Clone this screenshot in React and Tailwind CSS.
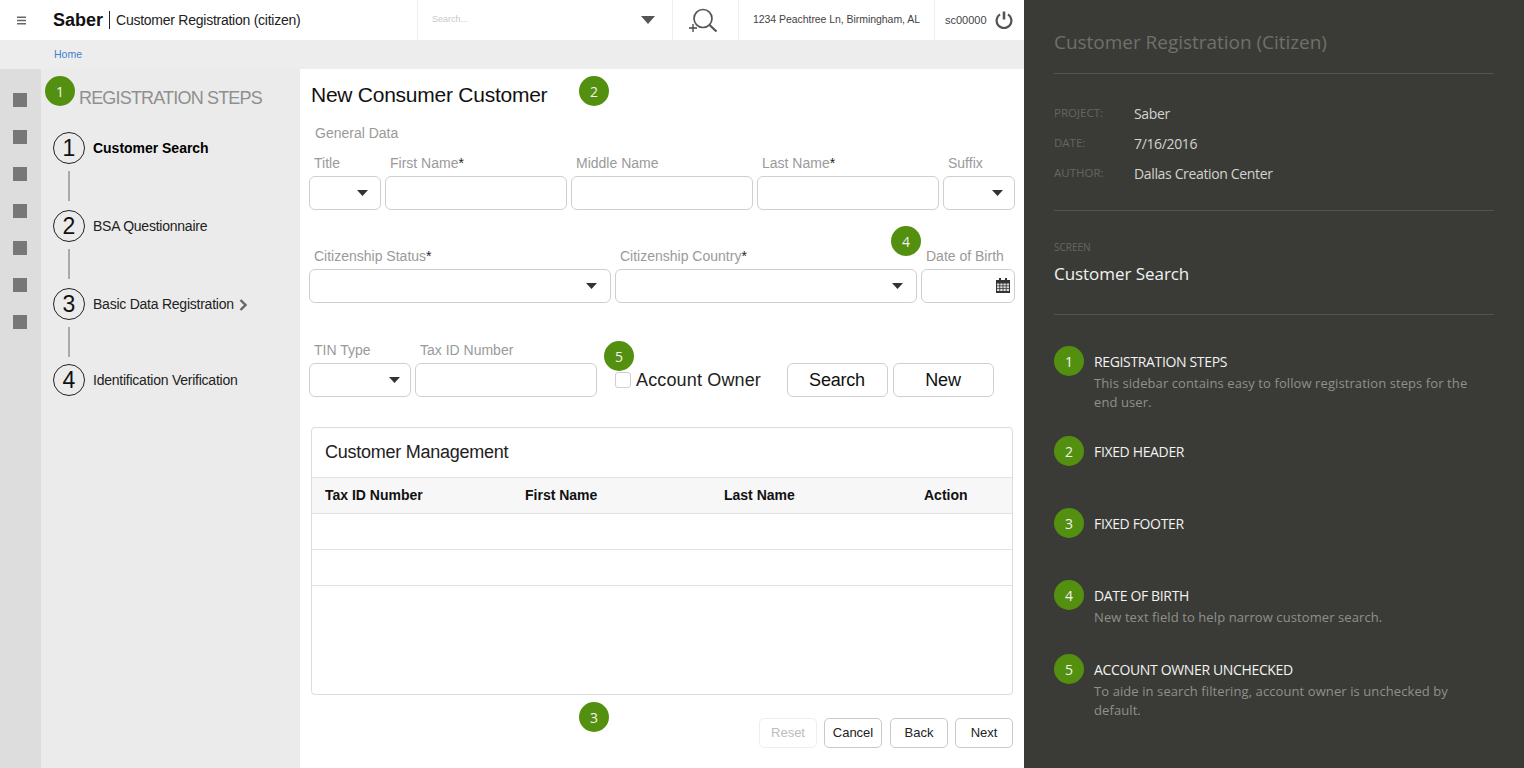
import React from "react";

const helv = "font-['Liberation_Sans','Inter',sans-serif]";
const seg = "font-['Open_Sans','Noto_Sans',sans-serif]";

function Badge({ n, className = "" }) {
  return (
    <div className={`absolute w-[30px] h-[30px] rounded-full bg-[#53900f] text-[#f2f2f2] flex items-center justify-center text-[14px] ${seg} ${className}`}>
      {n}
    </div>
  );
}

function Caret({ className = "" }) {
  return (
    <svg className={className} width="11" height="6" viewBox="0 0 11 6">
      <path d="M0 0h11L5.5 6z" fill="#333" />
    </svg>
  );
}

function Label({ children, star }) {
  return (
    <div className="h-[14px] leading-[14px] text-[14px] text-[#9a9a9a] pl-[5px] whitespace-nowrap">
      {children}
      {star && <span className="text-[#222]">*</span>}
    </div>
  );
}

function Field({ label, star, w, select, cal, pr = "pr-[13px]" }) {
  return (
    <div className={`flex flex-col gap-[6px] ${w}`}>
      <Label star={star}>{label}</Label>
      <div className={`h-[34px] border border-[#cfcfcf] rounded-[6px] bg-white flex items-center justify-end ${pr}`}>
        {select && <Caret />}
        {cal && (
          <svg className="mr-[-9px] mt-[-2px]" width="14" height="15" viewBox="0 0 14 15">
            <path d="M3 0h2v2H3zM9 0h2v2H9z" fill="#333" />
            <path d="M0 2h14v13H0z" fill="#333" />
            <path d="M1 5.5h2.4v2H1zM4.2 5.5h2.4v2H4.2zM7.4 5.5h2.4v2H7.4zM10.6 5.5H13v2h-2.4zM1 8.3h2.4v2H1zM4.2 8.3h2.4v2H4.2zM7.4 8.3h2.4v2H7.4zM10.6 8.3H13v2h-2.4zM1 11.1h2.4v2H1zM4.2 11.1h2.4v2H4.2zM7.4 11.1h2.4v2H7.4zM10.6 11.1H13v2h-2.4z" fill="#ddd" />
          </svg>
        )}
      </div>
    </div>
  );
}

function Step({ n, label, bold, arrow, line, lineBox = "h-[46px]" }) {
  return (
    <div className="flex flex-col">
      <div className="flex items-center h-[32px]">
        <div className="w-[32px] h-[32px] rounded-full border border-[#222] flex items-center justify-center text-[23px] text-[#111] bg-[#ebebeb] shrink-0">
          {n}
        </div>
        <div className={`ml-[8px] text-[14px] ${bold ? "font-bold text-black tracking-[-0.02px]" : "text-[#222] tracking-[-0.24px]"}`}>{label}</div>
        {arrow && (
          <svg className="ml-[5px] mt-[1px]" width="9" height="12" viewBox="0 0 9 12">
            <path d="M1.5 1l5 5-5 5" fill="none" stroke="#666" strokeWidth="2.4" />
          </svg>
        )}
      </div>
      {line && (
        <div className={`${lineBox} flex flex-col pl-[15px] pt-[7px]`}>
          <div className="w-[2px] h-[30px] bg-[#a9a9a9]" />
        </div>
      )}
    </div>
  );
}

function Btn({ children, w, dim, className = "" }) {
  return (
    <div className={`${w} ${className} h-[30px] rounded-[5px] border flex items-center justify-center text-[13px] ${dim ? "border-[#eeeeee] text-[#bdbdbd]" : "border-[#c9c9c9] text-[#222]"}`}>
      {children}
    </div>
  );
}

function Note({ n, title, text, h }) {
  return (
    <div className={`flex ${h}`}>
      <div className="w-[30px] h-[30px] rounded-full bg-[#53900f] text-[#f2f2f2] flex items-center justify-center text-[14px] shrink-0">{n}</div>
      <div className="ml-[10px] pt-[6px] w-[385px]">
        <div className="text-[14px] leading-[19px] text-[#f2f2f2] tracking-[-0.35px]">{title}</div>
        {text && <div className="text-[13px] leading-[19px] text-[#8f908c] mt-[3px] tracking-[0.09px]">{text}</div>}
      </div>
    </div>
  );
}

function Meta({ k, v }) {
  return (
    <div className="flex items-center h-[30px]">
      <div className="w-[80px] text-[11.5px] text-[#656661]">{k}</div>
      <div className="text-[14px] text-[#d3d3d0] tracking-[-0.35px]">{v}</div>
    </div>
  );
}

export default function App() {
  return (
    <div className={`w-[1524px] h-[768px] flex overflow-hidden bg-white ${helv}`}>
      <div className="w-[1024px] h-full flex flex-col relative">
        <header className="h-[40px] flex items-center bg-white shrink-0">
          <div className="w-[53px] pl-[17px] shrink-0">
            <svg width="9" height="9" viewBox="0 0 9 9"><path d="M0 0.5h9v1.4H0zM0 3.8h9v1.4H0zM0 7.1h9v1.4H0z" fill="#666" /></svg>
          </div>
          <div className="w-[364px] shrink-0 flex items-center whitespace-nowrap">
            <span className="text-[18px] font-bold text-[#111]">Saber</span>
            <span className="w-px h-[18px] bg-[#222] mx-[6px]" />
            <span className="text-[14px] text-[#222] tracking-[-0.25px] mt-[1px]">Customer Registration (citizen)</span>
          </div>
          <div className="w-[255px] h-full border-l border-[#eeeeee] flex items-center justify-between pl-[14px] pr-[17px] shrink-0">
            <span className="text-[9px] text-[#c8c8c8]">Search...</span>
            <svg width="14" height="8" viewBox="0 0 14 8"><path d="M0 0h14L7 8z" fill="#555" /></svg>
          </div>
          <div className="w-[66px] h-full border-l border-[#eeeeee] flex items-center justify-center shrink-0">
            <svg width="34" height="26" viewBox="0 0 34 26">
              <circle cx="14" cy="11.5" r="9" fill="none" stroke="#555" strokeWidth="1.7" />
              <path d="M20.5 18l7 6.5" stroke="#555" strokeWidth="2.2" />
              <path d="M0 21h8M4 17v8" stroke="#444" strokeWidth="1.3" />
            </svg>
          </div>
          <div className="w-[196px] h-full border-l border-[#eeeeee] flex items-center justify-center text-[10.5px] text-[#444] shrink-0 whitespace-nowrap tracking-[-0.05px]">
            1234 Peachtree Ln, Birmingham, AL
          </div>
          <div className="flex-1 h-full border-l border-[#eeeeee] flex items-center pl-[10px] text-[11px] text-[#444]">
            <span>sc00000</span>
            <svg className="ml-[8px]" width="18" height="18" viewBox="0 0 18 18">
              <path d="M5 3.4a7.4 7.4 0 1 0 8 0" fill="none" stroke="#555" strokeWidth="2.3" />
              <path d="M9 0.5v8" stroke="#555" strokeWidth="2.6" />
            </svg>
          </div>
        </header>

        <div className="h-[29px] bg-[#eeeded] flex items-center pl-[54px] pt-[1px] text-[10.5px] text-[#3d7fd1] shrink-0">Home</div>

        <div className="flex-1 flex min-h-0">
          <aside className="w-[41px] bg-[#dddddd] flex flex-col items-center gap-[23px] pt-[24px] pr-[1px] shrink-0">
            {[0, 1, 2, 3, 4, 5, 6].map((i) => (
              <div key={i} className="w-[14px] h-[14px] bg-[#777777]" />
            ))}
          </aside>

          <div className="w-[259px] bg-[#ebebeb] shrink-0 pl-[12px]">
            <div className="pl-[26px] pt-[18px] h-[63px] text-[18px] leading-[22px] text-[#8f8f8f] tracking-[-0.82px] whitespace-nowrap">REGISTRATION STEPS</div>
            <Step n="1" label="Customer Search" bold line />
            <Step n="2" label="BSA Questionnaire" line />
            <Step n="3" label="Basic Data Registration" arrow line lineBox="h-[44px]" />
            <Step n="4" label="Identification Verification" />
          </div>

          <main className="flex-1 pl-[9px] pr-[9px] flex flex-col">
            <h1 className="pl-[2px] pt-[13px] h-[56px] text-[21px] leading-[26px] text-[#111] tracking-[-0.25px] font-normal">New Consumer Customer</h1>
            <div className="pl-[6px] h-[24px] text-[14px] leading-[16px] text-[#9a9a9a]">General Data</div>
            <div className="flex gap-[4px] mt-[7px]">
              <Field label="Title" w="w-[72px]" select pr="pr-[12px]" />
              <Field label="First Name" star w="w-[182px]" />
              <Field label="Middle Name" w="w-[182px]" />
              <Field label="Last Name" star w="w-[182px]" />
              <Field label="Suffix" w="w-[72px]" select pr="pr-[11px]" />
            </div>
            <div className="flex gap-[4px] mt-[39px]">
              <Field label="Citizenship Status" star w="w-[302px]" select />
              <Field label="Citizenship Country" star w="w-[302px]" select />
              <Field label="Date of Birth" w="w-[94px]" cal />
            </div>
            <div className="flex items-end mt-[40px]">
              <div className="flex gap-[4px]">
                <Field label="TIN Type" w="w-[102px]" select pr="pr-[10px]" />
                <Field label="Tax ID Number" w="w-[182px]" />
              </div>
              <div className="flex items-center h-[34px] ml-[18px] w-[172px]">
                <div className="w-[16px] h-[16px] border border-[#cfcfcf] rounded-[3px] bg-white" />
                <span className="ml-[5px] text-[18px] text-[#222] whitespace-nowrap tracking-[0.15px]">Account Owner</span>
              </div>
              <div className="w-[101px] h-[34px] border border-[#cfcfcf] rounded-[6px] flex items-center justify-center text-[18px] text-[#111] tracking-[-0.2px] pr-[1px]">Search</div>
              <div className="w-[101px] h-[34px] border border-[#cfcfcf] rounded-[6px] flex items-center justify-center text-[18px] text-[#111] ml-[5px] tracking-[-0.2px] pr-[1px]">New</div>
            </div>

            <div className="ml-[2px] mt-[30px] w-[702px] h-[268px] border border-[#dcdcdc] rounded-[4px] flex flex-col">
              <div className="h-[49px] flex items-center pl-[13px] text-[18px] text-[#222] tracking-[-0.25px]">Customer Management</div>
              <div className="h-[37px] bg-[#f7f7f7] border-y border-[#e2e2e2] flex items-center pl-[13px] text-[14px] font-bold text-[#111]">
                <div className="w-[200px]">Tax ID Number</div>
                <div className="w-[199px]">First Name</div>
                <div className="w-[200px]">Last Name</div>
                <div>Action</div>
              </div>
              <div className="h-[36px] border-b border-[#e2e2e2]" />
              <div className="h-[36px] border-b border-[#e2e2e2]" />
            </div>

            <div className="flex justify-end gap-[7px] mt-[23px] w-[704px]">
              <Btn w="w-[58px]" dim>Reset</Btn>
              <Btn w="w-[58px]">Cancel</Btn>
              <Btn w="w-[58px]" className="ml-[1px]">Back</Btn>
              <Btn w="w-[58px]">Next</Btn>
            </div>
          </main>
        </div>

        <Badge n="1" className="left-[45px] top-[76px]" />
        <Badge n="2" className="left-[579px] top-[76px]" />
        <Badge n="3" className="left-[579px] top-[702px]" />
        <Badge n="4" className="left-[891px] top-[226px]" />
        <Badge n="5" className="left-[604px] top-[341px]" />
      </div>

      <aside className={`w-[500px] h-full bg-[#3a3b36] px-[30px] ${seg}`}>
        <div className="h-[74px] border-b border-[#52534e] pt-[28px] text-[19px] leading-[28px] text-[#6f706b] tracking-[-0.03px]">Customer Registration (Citizen)</div>
        <div className="h-[137px] border-b border-[#52534e] pt-[24px]">
          <Meta k="PROJECT:" v="Saber" />
          <Meta k="DATE:" v="7/16/2016" />
          <Meta k="AUTHOR:" v="Dallas Creation Center" />
        </div>
        <div className="h-[104px] border-b border-[#52534e] pt-[29px]">
          <div className="text-[10px] leading-[14px] text-[#656661]">SCREEN</div>
          <div className="text-[17px] leading-[24px] text-[#f2f2f2] mt-[8px] tracking-[-0.05px]">Customer Search</div>
        </div>
        <div className="pt-[31px]">
          <Note n="1" h="h-[90px]" title="REGISTRATION STEPS" text="This sidebar contains easy to follow registration steps for the end user." />
          <Note n="2" h="h-[72px]" title="FIXED HEADER" />
          <Note n="3" h="h-[72px]" title="FIXED FOOTER" />
          <Note n="4" h="h-[74px]" title="DATE OF BIRTH" text="New text field to help narrow customer search." />
          <Note n="5" title="ACCOUNT OWNER UNCHECKED" text="To aide in search filtering, account owner is unchecked by default." />
        </div>
      </aside>
    </div>
  );
}
